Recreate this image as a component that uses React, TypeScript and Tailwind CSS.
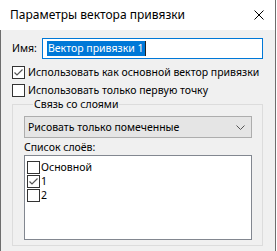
import React from 'react';

function Check({ checked }: { checked?: boolean }) {
    return (
        <div className="w-[13px] h-[13px] border border-[#333333] bg-white shrink-0 flex items-center justify-center">
            {checked && (
                <svg width="11" height="11" viewBox="0 0 11 11">
                    <polyline
                        points="1.5,5.5 4,8 9.5,2.5"
                        fill="none"
                        stroke="#555555"
                        strokeWidth="1.2"
                    />
                </svg>
            )}
        </div>
    );
}

const layers = [
    { name: 'Основной', checked: false },
    { name: '1', checked: true },
    { name: '2', checked: false },
];

export default function App() {
    return (
        <div className="w-[277px] h-[251px] bg-white font-['Noto_Sans',sans-serif] text-[10.5px] text-black leading-none whitespace-nowrap">
            <div className="w-[276px] h-[251px] flex flex-col border-r border-[#6e6e6e]">
                <div className="h-[30px] flex items-center justify-between pl-[10px] pr-[11px] bg-white">
                    <span className="text-[12px]">Параметры вектора привязки</span>
                    <svg width="10" height="10" viewBox="0 0 10 10">
                        <path d="M0.5 0.5 L9.5 9.5 M9.5 0.5 L0.5 9.5" stroke="#000" strokeWidth="1" />
                    </svg>
                </div>
                <div className="flex-1 bg-[#f0f0f0] border-l border-[#6e6e6e] pl-[11px] pr-[12px] pt-[8px]">
                    <div className="flex items-center h-[21px]">
                        <span className="w-[30px]">Имя:</span>
                        <div className="flex-1 h-[21px] border border-[#0078d7] bg-white flex items-center pl-[4px]">
                            <span className="bg-[#0078d7] text-white h-[15px] flex items-center px-[1px]">
                                Вектор привязки 1
                            </span>
                            <span className="w-[1px] h-[15px] bg-[#222]" />
                        </div>
                    </div>
                    <div className="flex items-center gap-[3px] mt-[7px] h-[13px]">
                        <Check checked />
                        <span>Использовать как основной вектор привязки</span>
                    </div>
                    <div className="flex items-center gap-[3px] mt-[5px] h-[13px]">
                        <Check />
                        <span>Использовать только первую точку</span>
                    </div>
                    <fieldset className="border border-[#dcdcdc] h-[149px] pl-[11px] pr-[10px]">
                        <legend className="ml-[9px] px-[1px] leading-[14px]">Связь со слоями</legend>
                        <div className="mt-[5px] h-[22px] bg-[#e5e5e5] border border-[#adadad] flex items-center justify-between pl-[3px] pr-[6px]">
                            <span>Рисовать только помеченные</span>
                            <svg width="9" height="5" viewBox="0 0 9 5">
                                <polyline points="0.5,0.5 4.5,4.5 8.5,0.5" fill="none" stroke="#555" strokeWidth="1" />
                            </svg>
                        </div>
                        <div className="mt-[2px] h-[14px] flex items-center">Список слоёв:</div>
                        <div className="mt-[1px] h-[85px] bg-white border border-[#828790] pt-[4px] pl-[2px] flex flex-col">
                            {layers.map((l) => (
                                <div key={l.name} className="flex items-center gap-[1px] h-[14px]">
                                    <Check checked={l.checked} />
                                    <span>{l.name}</span>
                                </div>
                            ))}
                        </div>
                    </fieldset>
                </div>
            </div>
        </div>
    );
}
